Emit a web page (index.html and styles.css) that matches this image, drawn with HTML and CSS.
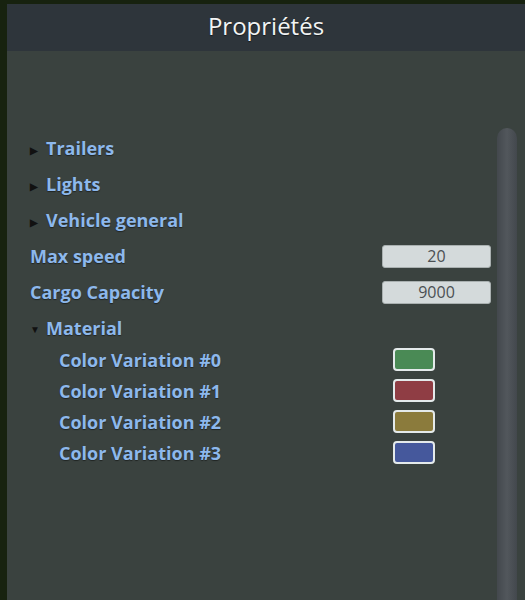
FILE: index.html
```html
<!DOCTYPE html>
<html>
	<head>
		<meta charset="UTF-8"/>
		<title>Propriétés</title>
		<link rel="stylesheet" href="styles.css">
	</head>
	<body>
		<div class="panel">
			<div class="panel_header">Propriétés</div>
			<div class="panel_body">
				<div class="props">
					<div class="row tree first"><span class="arrow">&#9654;</span>Trailers</div>
					<div class="row tree"><span class="arrow">&#9654;</span>Lights</div>
					<div class="row tree"><span class="arrow">&#9654;</span>Vehicle general</div>
					<div class="row field">
						<span class="label">Max speed</span>
						<span class="value"><span class="input">20</span></span>
					</div>
					<div class="row field">
						<span class="label">Cargo Capacity</span>
						<span class="value"><span class="input">9000</span></span>
					</div>
					<div class="row tree open"><span class="arrow down">&#9660;</span>Material</div>
					<div class="row color">
						<span class="label">Color Variation #0</span>
						<span class="value"><span class="swatch green"></span></span>
					</div>
					<div class="row color">
						<span class="label">Color Variation #1</span>
						<span class="value"><span class="swatch red"></span></span>
					</div>
					<div class="row color">
						<span class="label">Color Variation #2</span>
						<span class="value"><span class="swatch olive"></span></span>
					</div>
					<div class="row color">
						<span class="label">Color Variation #3</span>
						<span class="value"><span class="swatch blue"></span></span>
					</div>
				</div>
				<div class="scrollbar"><div class="thumb"></div></div>
			</div>
		</div>
	</body>
</html>
```

FILE: styles.css
```css
html, body{
	margin: 0;
	height: 100%;
}
body{
	background-color: #17220f;
	font-family: "Open Sans", "Noto Sans", sans-serif;
	overflow: hidden;
}
div.panel{
	margin: 4px 0 0 7px;
	height: 596px;
	display: flex;
	flex-direction: column;
	background-color: #3a423f;
}
div.panel_header{
	height: 47px;
	line-height: 44px;
	text-align: center;
	color: #f2f4f4;
	font-size: 24px;
	background-color: #2e353b;
	text-shadow: 0 1px 1px rgba(0,0,0,0.5);
}
div.panel_body{
	flex: 1;
	display: flex;
}
div.props{
	flex: 1;
	padding: 79px 0 0 23px;
	color: #8db8ec;
	font-weight: 700;
	font-size: 18px;
	text-shadow: 0 1px 1px rgba(0,0,0,0.45);
}
div.row{
	display: flex;
	align-items: center;
	height: 36px;
}
div.tree.open{
	height: 33px;
	padding-top: 1px;
}
div.color{
	height: 31px;
	padding-left: 29px;
}
span.arrow{
	width: 16px;
	font-size: 10px;
	color: #111;
	text-shadow: none;
	padding-top: 3px;
}
span.label{
	flex: 1;
}
span.value{
	width: 109px;
	margin-right: 6px;
	display: flex;
}
span.input{
	flex: 1;
	height: 21px;
	line-height: 21px;
	text-align: center;
	font-weight: 400;
	font-size: 16px;
	color: #4b5053;
	text-shadow: none;
	background-color: #d4dadb;
	border: 1px solid #a9b0b0;
	border-radius: 3px;
}
span.swatch{
	margin-left: 11px;
	width: 38px;
	height: 19px;
	border: 2px solid #e4eaeb;
	border-radius: 4px;
}
span.green{ background-color: #4a8a55; }
span.red{ background-color: #8f3d44; }
span.olive{ background-color: #8b7b3c; }
span.blue{ background-color: #45589c; }
div.scrollbar{
	width: 20px;
	margin: 77px 8px 0 0;
}
div.thumb{
	height: 100%;
	border-radius: 10px 10px 0 0;
	background: linear-gradient(to right, #43484d, #52575c 50%, #43484d);
}
```
